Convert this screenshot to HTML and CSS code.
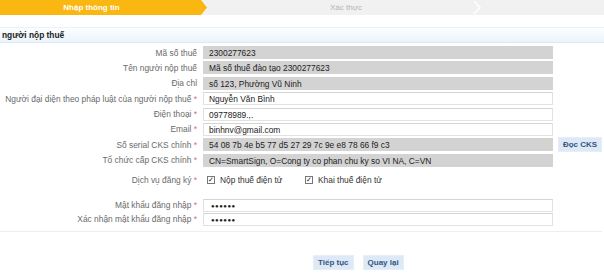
FILE: index.html
```html
<!DOCTYPE html>
<html lang="vi">
<head>
    <meta charset="UTF-8">
    <title>Đăng ký</title>
    <link rel="stylesheet" href="styles.css">
</head>
<body>
    <div class="steps">
        <div class="step active">Nhập thông tin</div>
        <div class="step next">Xác thực<span class="chev"></span></div>
    </div>

    <h3 class="section">người nộp thuế</h3>

    <form class="form">
        <div class="group">
            <div class="row"><label>Mã số thuế</label><span class="field ro">2300277623</span></div>
            <div class="row"><label>Tên người nộp thuế</label><span class="field ro">Mã số thuế đào tạo 2300277623</span></div>
            <div class="row"><label>Địa chỉ</label><span class="field ro">số 123, Phường Vũ Ninh</span></div>
            <div class="row"><label>Người đại diện theo pháp luật của người nộp thuế <i>*</i></label><span class="field">Nguyễn Văn Bình</span></div>
            <div class="row"><label>Điện thoại <i>*</i></label><span class="field">09778989.,.</span></div>
            <div class="row"><label>Email <i>*</i></label><span class="field">binhnv@gmail.com</span></div>
            <div class="row"><label>Số serial CKS chính <i>*</i></label><span class="field ro">54 08 7b 4e b5 77 d5 27 29 7c 9e e8 78 66 f9 c3</span><button type="button" class="btn btn-side">Đọc CKS</button></div>
            <div class="row"><label>Tổ chức cấp CKS chính <i>*</i></label><span class="field ro">CN=SmartSign, O=Cong ty co phan chu ky so VI NA, C=VN</span></div>
        </div>

        <div class="row checks">
            <label>Dịch vụ đăng ký <i>*</i></label>
            <span class="opt"><span class="box">&#10003;</span>Nộp thuế điện tử</span>
            <span class="opt"><span class="box">&#10003;</span>Khai thuế điện tử</span>
        </div>

        <div class="group pw">
            <div class="row"><label>Mật khẩu đăng nhập <i>*</i></label><span class="field dots">&#9679;&#9679;&#9679;&#9679;&#9679;&#9679;</span></div>
            <div class="row"><label>Xác nhận mật khẩu đăng nhập <i>*</i></label><span class="field dots">&#9679;&#9679;&#9679;&#9679;&#9679;&#9679;</span></div>
        </div>

        <div class="actions">
            <button type="button" class="btn">Tiếp tục</button>
            <button type="button" class="btn">Quay lại</button>
        </div>
    </form>
</body>
</html>
```

FILE: styles.css
```css
*{
    margin: 0;
    padding: 0;
    box-sizing: border-box;
}
body{
    width: 604px;
    height: 280px;
    background: #fff;
    font-family: "Liberation Sans", Arial, sans-serif;
    font-size: 8.4px;
    color: #222;
    overflow: hidden;
}
.steps{
    display: flex;
    height: 15px;
    background: #f1f1f1;
}
.step{
    display: flex;
    align-items: center;
    justify-content: center;
    font-size: 8px;
    font-weight: bold;
}
.step.active{
    width: 207px;
    padding-right: 24px;
    color: #fff;
    background: #fab611;
    clip-path: polygon(0 0, 201px 0, 207px 50%, 201px 100%, 0 100%);
}
.step.next{
    position: relative;
    width: 274px;
    color: #b4b4b4;
    font-weight: normal;
    justify-content: flex-start;
    padding-left: 123px;
}
.chev{
    position: absolute;
    right: 0;
    top: 1px;
    width: 8px;
    height: 13px;
    background: #fff;
    clip-path: polygon(0 0, 2px 0, 100% 50%, 2px 100%, 0 100%, 6px 50%);
}
.section{
    margin-top: 12px;
    height: 16px;
    padding-left: 2px;
    font-size: 8.4px;
    font-weight: bold;
    line-height: 15px;
    color: #222;
    background: linear-gradient(#fdfeff, #eaf4fc);
    border-top: 1px solid #edf2f7;
    border-bottom: 1px solid #dce9f4;
}
.form{
    padding-top: 3px;
}
.row{
    display: flex;
    align-items: center;
    height: 13px;
    margin-bottom: 2.4px;
}
.row label{
    width: 199px;
    padding-right: 2px;
    text-align: right;
    color: #6a6a6a;
    white-space: nowrap;
}
.row label i{
    font-style: normal;
    color: #c07070;
}
.field{
    width: 350px;
    height: 13px;
    margin-left: 4px;
    padding-left: 5px;
    line-height: 12px;
    background: #fff;
    border: 1px solid #e2e2e2;
    border-top-color: #d4d4d4;
    white-space: nowrap;
    overflow: hidden;
}
.field.ro{
    background: #d3d3d3;
    border-color: #d3d3d3;
}
.dots{
    font-size: 6px;
    letter-spacing: 0.5px;
    padding-left: 7px;
}
.btn{
    height: 15px;
    padding: 0 4px;
    font-family: "Liberation Sans", Arial, sans-serif;
    font-size: 8px;
    font-weight: bold;
    color: #35557f;
    background: #dde9f6;
    border: 1px solid #e6eef8;
    white-space: nowrap;
}
.btn-side{
    margin-left: 5px;
    width: 44px;
    padding: 0;
}
.checks{
    margin-top: 7px;
    margin-bottom: 12px;
}
.opt{
    display: flex;
    align-items: center;
    color: #333;
    width: 98px;
}
.checks .opt:first-of-type{
    margin-left: 8px;
}
.box{
    width: 8px;
    height: 8px;
    margin-right: 5px;
    border: 1px solid #777;
    font-size: 7px;
    line-height: 6px;
    text-align: center;
    color: #111;
}
.pw .row{
    margin-bottom: 1px;
}
.pw{
    padding-bottom: 4px;
    border-bottom: 1px solid #eeeeee;
    width: 602px;
}
.actions{
    display: flex;
    gap: 9px;
    padding-left: 313px;
    margin-top: 23px;
}
```
